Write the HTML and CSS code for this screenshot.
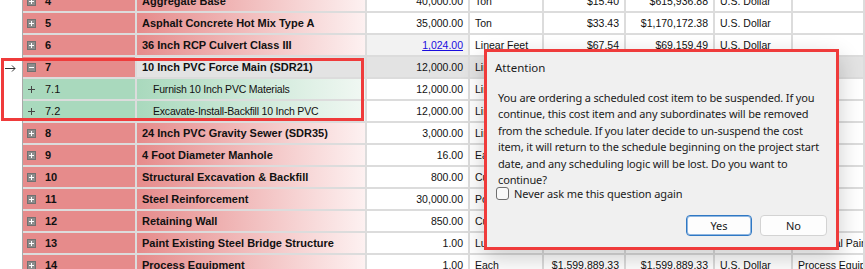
FILE: index.html
```html
<!DOCTYPE html>
<html lang="en">

<head>
    <meta charset="UTF-8">
    <meta name="viewport" content="width=device-width, initial-scale=1.0">
    <title>Cost Items - Attention</title>
    <link rel="stylesheet" href="styles.css">
</head>

<body>
    <div class="screen">
        <div class="grid">
            <div class="row">
                <div class="gutter"></div>
                <div class="cell num"><svg class="exp" width="9" height="9" viewBox="0 0 9 9"><rect x="0.5" y="0.5" width="8" height="8" fill="#8c8c8c" stroke="#707070"/><path d="M2 4.5h5M4.5 2v5" stroke="#fff"/></svg>4</div>
                <div class="cell desc">Aggregate Base</div>
                <div class="cell qty">40,000.00</div>
                <div class="cell">Ton</div>
                <div class="cell money">$15.40</div>
                <div class="cell money">$615,936.88</div>
                <div class="cell">U.S. Dollar</div>
                <div class="cell"></div>
            </div>
            <div class="row">
                <div class="gutter"></div>
                <div class="cell num"><svg class="exp" width="9" height="9" viewBox="0 0 9 9"><rect x="0.5" y="0.5" width="8" height="8" fill="#8c8c8c" stroke="#707070"/><path d="M2 4.5h5M4.5 2v5" stroke="#fff"/></svg>5</div>
                <div class="cell desc">Asphalt Concrete Hot Mix Type A</div>
                <div class="cell qty">35,000.00</div>
                <div class="cell">Ton</div>
                <div class="cell money">$33.43</div>
                <div class="cell money">$1,170,172.38</div>
                <div class="cell">U.S. Dollar</div>
                <div class="cell"></div>
            </div>
            <div class="row">
                <div class="gutter"></div>
                <div class="cell num"><svg class="exp" width="9" height="9" viewBox="0 0 9 9"><rect x="0.5" y="0.5" width="8" height="8" fill="#8c8c8c" stroke="#707070"/><path d="M2 4.5h5M4.5 2v5" stroke="#fff"/></svg>6</div>
                <div class="cell desc">36 Inch RCP Culvert Class III</div>
                <div class="cell qty hot"><a class="link" href="#">1,024.00</a></div>
                <div class="cell">Linear Feet</div>
                <div class="cell money">$67.54</div>
                <div class="cell money">$69,159.49</div>
                <div class="cell">U.S. Dollar</div>
                <div class="cell"></div>
            </div>
            <div class="row sel">
                <div class="gutter"><svg class="arrow" width="11" height="7" viewBox="0 0 11 7"><path d="M0 3.5h10M7 0.5l3 3-3 3" fill="none" stroke="#333"/></svg></div>
                <div class="cell num"><svg class="exp" width="9" height="9" viewBox="0 0 9 9"><rect x="0.5" y="0.5" width="8" height="8" fill="#8c8c8c" stroke="#707070"/><path d="M2 4.5h5" stroke="#fff"/></svg>7</div>
                <div class="cell desc">10 Inch PVC Force Main (SDR21)</div>
                <div class="cell qty">12,000.00</div>
                <div class="cell">Linear Feet</div>
                <div class="cell money"></div>
                <div class="cell money"></div>
                <div class="cell"></div>
                <div class="cell"></div>
            </div>
            <div class="row sub">
                <div class="gutter"></div>
                <div class="cell num"><svg class="exp" width="9" height="9" viewBox="0 0 9 9"><path d="M1 4.5h7M4.5 1v7" stroke="#444"/></svg>7.1</div>
                <div class="cell desc">Furnish 10 Inch PVC Materials</div>
                <div class="cell qty">12,000.00</div>
                <div class="cell">Linear Feet</div>
                <div class="cell money"></div>
                <div class="cell money"></div>
                <div class="cell"></div>
                <div class="cell"></div>
            </div>
            <div class="row sub">
                <div class="gutter"></div>
                <div class="cell num"><svg class="exp" width="9" height="9" viewBox="0 0 9 9"><path d="M1 4.5h7M4.5 1v7" stroke="#444"/></svg>7.2</div>
                <div class="cell desc">Excavate-Install-Backfill 10 Inch PVC</div>
                <div class="cell qty">12,000.00</div>
                <div class="cell">Linear Feet</div>
                <div class="cell money"></div>
                <div class="cell money"></div>
                <div class="cell"></div>
                <div class="cell"></div>
            </div>
            <div class="row">
                <div class="gutter"></div>
                <div class="cell num"><svg class="exp" width="9" height="9" viewBox="0 0 9 9"><rect x="0.5" y="0.5" width="8" height="8" fill="#8c8c8c" stroke="#707070"/><path d="M2 4.5h5M4.5 2v5" stroke="#fff"/></svg>8</div>
                <div class="cell desc">24 Inch PVC Gravity Sewer (SDR35)</div>
                <div class="cell qty">3,000.00</div>
                <div class="cell">Linear Feet</div>
                <div class="cell money"></div>
                <div class="cell money"></div>
                <div class="cell"></div>
                <div class="cell"></div>
            </div>
            <div class="row">
                <div class="gutter"></div>
                <div class="cell num"><svg class="exp" width="9" height="9" viewBox="0 0 9 9"><rect x="0.5" y="0.5" width="8" height="8" fill="#8c8c8c" stroke="#707070"/><path d="M2 4.5h5M4.5 2v5" stroke="#fff"/></svg>9</div>
                <div class="cell desc">4 Foot Diameter Manhole</div>
                <div class="cell qty">16.00</div>
                <div class="cell">Each</div>
                <div class="cell money"></div>
                <div class="cell money"></div>
                <div class="cell"></div>
                <div class="cell"></div>
            </div>
            <div class="row">
                <div class="gutter"></div>
                <div class="cell num"><svg class="exp" width="9" height="9" viewBox="0 0 9 9"><rect x="0.5" y="0.5" width="8" height="8" fill="#8c8c8c" stroke="#707070"/><path d="M2 4.5h5M4.5 2v5" stroke="#fff"/></svg>10</div>
                <div class="cell desc">Structural Excavation &amp; Backfill</div>
                <div class="cell qty">800.00</div>
                <div class="cell">Cubic Yard</div>
                <div class="cell money"></div>
                <div class="cell money"></div>
                <div class="cell"></div>
                <div class="cell"></div>
            </div>
            <div class="row">
                <div class="gutter"></div>
                <div class="cell num"><svg class="exp" width="9" height="9" viewBox="0 0 9 9"><rect x="0.5" y="0.5" width="8" height="8" fill="#8c8c8c" stroke="#707070"/><path d="M2 4.5h5M4.5 2v5" stroke="#fff"/></svg>11</div>
                <div class="cell desc">Steel Reinforcement</div>
                <div class="cell qty">30,000.00</div>
                <div class="cell">Pound</div>
                <div class="cell money"></div>
                <div class="cell money"></div>
                <div class="cell"></div>
                <div class="cell"></div>
            </div>
            <div class="row">
                <div class="gutter"></div>
                <div class="cell num"><svg class="exp" width="9" height="9" viewBox="0 0 9 9"><rect x="0.5" y="0.5" width="8" height="8" fill="#8c8c8c" stroke="#707070"/><path d="M2 4.5h5M4.5 2v5" stroke="#fff"/></svg>12</div>
                <div class="cell desc">Retaining Wall</div>
                <div class="cell qty">850.00</div>
                <div class="cell">Cubic Yard</div>
                <div class="cell money"></div>
                <div class="cell money"></div>
                <div class="cell"></div>
                <div class="cell"></div>
            </div>
            <div class="row">
                <div class="gutter"></div>
                <div class="cell num"><svg class="exp" width="9" height="9" viewBox="0 0 9 9"><rect x="0.5" y="0.5" width="8" height="8" fill="#8c8c8c" stroke="#707070"/><path d="M2 4.5h5M4.5 2v5" stroke="#fff"/></svg>13</div>
                <div class="cell desc">Paint Existing Steel Bridge Structure</div>
                <div class="cell qty">1.00</div>
                <div class="cell">Lump Sum</div>
                <div class="cell money"></div>
                <div class="cell money"></div>
                <div class="cell"></div>
                <div class="cell">Structural Painting</div>
            </div>
            <div class="row">
                <div class="gutter"></div>
                <div class="cell num"><svg class="exp" width="9" height="9" viewBox="0 0 9 9"><rect x="0.5" y="0.5" width="8" height="8" fill="#8c8c8c" stroke="#707070"/><path d="M2 4.5h5M4.5 2v5" stroke="#fff"/></svg>14</div>
                <div class="cell desc">Process Equipment</div>
                <div class="cell qty">1.00</div>
                <div class="cell">Each</div>
                <div class="cell money">$1,599,889.33</div>
                <div class="cell money">$1,599,889.33</div>
                <div class="cell">U.S. Dollar</div>
                <div class="cell">Process Equipment</div>
            </div>
        </div>

        <!-- highlight round the suspended item -->
        <div class="mark"></div>

        <div class="dialog">
            <div class="dlg-title">Attention</div>
            <p class="dlg-text">You are ordering a scheduled cost item to be suspended. If you<br>continue, this cost item and any subordinates will be removed<br>from the schedule. If you later decide to un-suspend the cost<br>item, it will return to the schedule beginning on the project start<br>date, and any scheduling logic will be lost. Do you want to<br>continue?</p>
            <label class="dlg-check"><span class="box"></span>Never ask me this question again</label>
            <div class="dlg-buttons">
                <button class="btn default">Yes</button>
                <button class="btn">No</button>
            </div>
        </div>
    </div>
</body>

</html>
```

FILE: styles.css
```css
body {
    margin: 0;
    font-family: "Liberation Sans", Arial, sans-serif;
    background: #fff;
}

.screen {
    position: relative;
    width: 865px;
    height: 269px;
    overflow: hidden;
}

.grid {
    margin-top: -9px;
}

.row {
    display: grid;
    grid-template-columns: 23px 114px 230px 103px 74px 82px 89px 78px 1fr;
    height: 22px;
    font-size: 10.5px;
    color: #111;
}

.gutter {
    box-sizing: border-box;
    border-right: 1px solid #a8a8a8;
    background: #fff;
    display: flex;
    align-items: center;
    padding-left: 5px;
}

.cell {
    box-sizing: border-box;
    border-right: 2px solid #dcdcdc;
    border-bottom: 2px solid #dcdcdc;
    padding: 0 5px;
    line-height: 20px;
    white-space: nowrap;
    overflow: hidden;
    background: #fff;
}

.num {
    display: flex;
    align-items: center;
    gap: 9px;
    padding-left: 4px;
    background: #e68b8b;
    font-weight: bold;
    font-size: 11px;
}

.desc {
    font-weight: bold;
    font-size: 11px;
    background: linear-gradient(to right, #e68b8b, #fdf1f1);
}

.qty,
.money {
    text-align: right;
}

.hot {
    background: #f2f2f2;
}

.link {
    color: #1a0dde;
    text-decoration: underline;
}

.row.sel .cell {
    background: #e3e3e3;
}

.row.sel .num {
    background: #e68b8b;
}

.row.sub .num {
    background: #a9d9bd;
    font-weight: normal;
}

.row.sub .desc {
    background: linear-gradient(to right, #a9d9bd, #f1f8f3);
    font-weight: normal;
    font-size: 10.5px;
    letter-spacing: -0.2px;
    padding-left: 16px;
}

.mark {
    position: absolute;
    left: 1px;
    top: 58px;
    width: 363px;
    height: 63px;
    box-sizing: border-box;
    border: 3px solid #ef3b3b;
}

.dialog {
    position: absolute;
    left: 484px;
    top: 49px;
    width: 355px;
    height: 201px;
    box-sizing: border-box;
    border: 3px solid #ef3b3b;
    background: #f0f0f0;
    box-shadow: 0 8px 22px rgba(0, 0, 0, 0.2);
    font-family: "Noto Sans", sans-serif;
    color: #1b1b1b;
}

.dlg-title {
    box-sizing: border-box;
    height: 38px;
    padding: 8px 0 0 8px;
    font-size: 11.5px;
    line-height: 16px;
}

.dlg-text {
    margin: 0;
    padding-left: 11px;
    font-size: 11px;
    line-height: 16.4px;
    letter-spacing: -0.15px;
    white-space: nowrap;
}

.dlg-check {
    display: flex;
    align-items: center;
    gap: 5px;
    height: 13px;
    margin-top: -1px;
    padding-left: 9px;
    font-size: 11px;
    letter-spacing: -0.1px;
}

.box {
    box-sizing: border-box;
    width: 13px;
    height: 13px;
    border: 1px solid #6f6f6f;
    border-radius: 3px;
    background: #f9f9f9;
}

.dlg-buttons {
    display: flex;
    justify-content: flex-end;
    gap: 8px;
    margin-top: 15px;
    padding-right: 9px;
}

.btn {
    width: 67px;
    height: 21px;
    padding: 0;
    font-family: "Noto Sans", sans-serif;
    font-size: 11px;
    color: #1b1b1b;
    background: #fdfdfd;
    border: 1px solid #d3d3d3;
    border-radius: 4px;
}

.btn.default {
    width: 66px;
    border-color: #2f78c4;
    box-shadow: inset 0 0 0 1px #8fb6e0;
}
```
